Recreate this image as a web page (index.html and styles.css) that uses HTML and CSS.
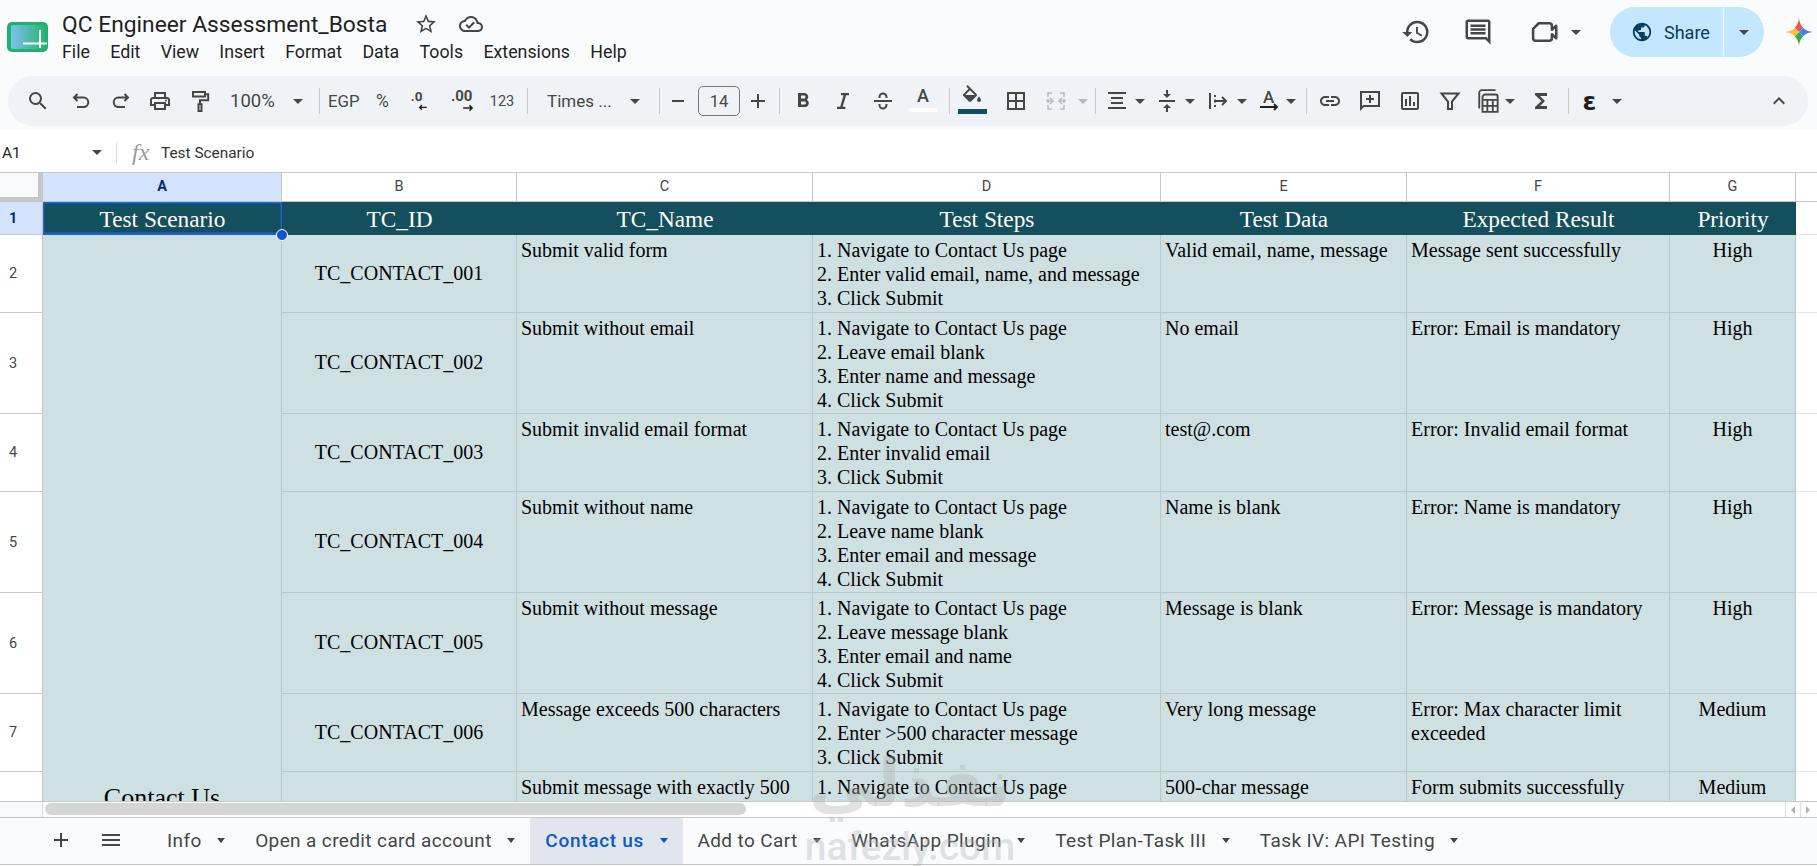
FILE: index.html
```html
<!DOCTYPE html>
<html lang="en">
<head>
<meta charset="utf-8">
<title>QC Engineer Assessment_Bosta</title>
<link rel="stylesheet" href="styles.css">
</head>
<body>
<div class="app">
  <header class="top">
    <div class="logo"><svg width="41" height="30" viewBox="0 0 41 30"><defs><linearGradient id="lg" x1="0" x2="1" y1="0" y2="0"><stop offset="0" stop-color="#7cc0f0"/><stop offset="1" stop-color="#28b56f"/></linearGradient></defs><rect width="41" height="30" rx="5" fill="#23b06c"/><rect x="4" y="3" width="34" height="24" rx="2" fill="url(#lg)"/><path d="M16 21.5h24M33 8v18" stroke="#fff" stroke-width="2" fill="none"/></svg></div>
    <div class="titlecol">
      <div class="titlerow">
        <span class="doc">QC Engineer Assessment_Bosta</span>
        <svg class="star" width="24" height="24" viewBox="0 0 24 24"><path d="M22 9.24l-7.19-.62L12 2 9.19 8.63 2 9.24l5.46 4.73L5.82 21 12 17.27 18.18 21l-1.63-7.03L22 9.24zM12 15.4l-3.76 2.27 1-4.28-3.32-2.88 4.38-.38L12 6.1l1.71 4.04 4.38.38-3.32 2.88 1 4.28L12 15.4z"/></svg>
        <svg class="cloud" width="24" height="24" viewBox="0 0 24 24"><path d="M19.35 10.04C18.67 6.59 15.64 4 12 4 9.11 4 6.6 5.64 5.35 8.04 2.34 8.36 0 10.91 0 14c0 3.31 2.69 6 6 6h13c2.76 0 5-2.24 5-5 0-2.64-2.05-4.78-4.65-4.96zM19 18H6c-2.21 0-4-1.79-4-4 0-2.05 1.53-3.76 3.56-3.97l1.07-.11.5-.95C8.08 7.14 9.94 6 12 6c2.62 0 4.88 1.86 5.39 4.43l.3 1.5 1.53.11c1.56.1 2.78 1.41 2.78 2.96 0 1.65-1.35 3-3 3zm-9-3.82l-2.09-2.09L6.5 13.5 10 17l6.01-6.01-1.41-1.41z"/></svg>
      </div>
      <nav class="menu"><span>File</span><span>Edit</span><span>View</span><span>Insert</span><span>Format</span><span>Data</span><span>Tools</span><span>Extensions</span><span>Help</span></nav>
    </div>
    <div class="actions">
      <svg class="ic-top" width="30" height="30" viewBox="0 0 24 24"><path d="M13 3a9 9 0 0 0-9 9H1l3.89 3.89.07.14L9 12H6c0-3.87 3.13-7 7-7s7 3.13 7 7-3.13 7-7 7c-1.93 0-3.68-.79-4.94-2.06l-1.42 1.42A8.954 8.954 0 0 0 13 21a9 9 0 0 0 0-18zm-1 5v5l4.28 2.54.72-1.21-3.5-2.08V8H12z"/></svg>
      <svg class="ic-top m32" width="30" height="30" viewBox="0 0 24 24"><path d="M21.99 4c0-1.1-.89-2-1.99-2H4c-1.1 0-2 .9-2 2v12c0 1.1.9 2 2 2h14l4 4-.01-18zM20 4v13.17L18.83 16H4V4h16zM6 12h12v2H6zm0-3h12v2H6zm0-3h12v2H6z"/></svg>
      <svg class="ic-top m37" width="30" height="30" viewBox="0 0 24 24"><path d="M7 5h8.5a2 2 0 0 1 2 2v3.2L21 7v10l-3.5-3.2V17a2 2 0 0 1-2 2H4.500a2 2 0 0 1-2-2V9.500z" fill="none" stroke="#444746" stroke-width="2" stroke-linejoin="round"/></svg>
      <i class="caret m11"></i>
      <div class="share">
        <div class="share-main"><svg width="22" height="22" viewBox="0 0 24 24"><path d="M12 2C6.48 2 2 6.48 2 12s4.48 10 10 10 10-4.48 10-10S17.52 2 12 2zm-1 17.93c-3.95-.49-7-3.85-7-7.93 0-.62.08-1.21.21-1.79L9 15v1c0 1.1.9 2 2 2v1.93zm6.9-2.54c-.26-.81-1-1.39-1.9-1.39h-1v-3c0-.55-.45-1-1-1H8v-2h2c.55 0 1-.45 1-1V7h2c1.1 0 2-.9 2-2v-.41c2.93 1.19 5 4.06 5 7.41 0 2.08-.8 3.97-2.1 5.39z"/></svg><span>Share</span></div>
        <div class="share-drop"><i class="caret caret-share"></i></div>
      </div>
      <svg class="gem" width="28" height="28" viewBox="0 0 24 24"><defs><clipPath id="gc"><path d="M12 0C12.6 7 17 11.4 24 12 17 12.6 12.6 17 12 24 11.4 17 7 12.6 0 12 7 11.4 11.4 7 12 0Z"/></clipPath></defs><g clip-path="url(#gc)"><path d="M0 0h24L12 12z" fill="#e8574e"/><path d="M24 0v24L12 12z" fill="#4a7fe8"/><path d="M0 24h24L12 12z" fill="#34a853"/><path d="M0 0v24l12-12z" fill="#f7c23c"/></g></svg>
    </div>
  </header>

  <div class="toolbar">
    <span class="b w39"><svg width="24" height="24" viewBox="0 0 24 24"><path d="M15.5 14h-.79l-.28-.27A6.47 6.47 0 0 0 16 9.5 6.5 6.5 0 1 0 9.5 16c1.61 0 3.09-.59 4.23-1.57l.27.28v.79l5 4.99L20.49 19l-4.99-5zm-6 0C7.01 14 5 11.99 5 9.5S7.01 5 9.5 5 14 7.01 14 9.5 11.99 14 9.5 14z"/></svg></span>
    <span class="b w39 m4"><svg class="st" width="24" height="24" viewBox="0 0 24 24"><path d="M8.5 5 5 8.5 8.5 12M5 8.5h9.5a4.8 4.8 0 0 1 0 9.6H8"/></svg></span>
    <span class="b w39"><svg class="st" width="24" height="24" viewBox="0 0 24 24"><path d="M15.5 5 19 8.5 15.5 12M19 8.5H9.5a4.8 4.8 0 0 0 0 9.6H16"/></svg></span>
    <span class="b w39"><svg width="24" height="24" viewBox="0 0 24 24"><path d="M19 8h-1V3H6v5H5c-1.66 0-3 1.34-3 3v6h4v4h12v-4h4v-6c0-1.66-1.34-3-3-3zM8 5h8v3H8V5zm8 14H8v-4h8v4zm2-4v-2H6v2H4v-4c0-.55.45-1 1-1h14c.55 0 1 .45 1 1v4h-2z"/><circle cx="18" cy="11.5" r="1"/></svg></span>
    <span class="b w39"><svg class="st" width="24" height="24" viewBox="0 0 24 24"><path d="M5 3h12v4.5H5zM17 5.2h3.2v6H12v4M10.5 15.3h3V22h-3z"/></svg></span>
    <span class="t zoomt">100%</span>
    <span class="cw w22 m11"><i class="caret"></i></span>
    <i class="sep m10"></i>
    <span class="t egp m8">EGP</span>
    <span class="t pct">%</span>
    <span class="dec w24"><svg width="30" height="30" viewBox="0 0 30 30"><text x="6" y="15" class="dect">.0</text><path d="M26 23h-9m3-3-3 3 3 3" class="dar"/></svg></span>
    <span class="dec w30 m20"><svg width="34" height="30" viewBox="0 0 34 30"><text x="1" y="15" class="dect">.00</text><path d="M15 23h10m-3-3 3 3-3 3" class="dar"/></svg></span>
    <span class="t num m7">123</span>
    <i class="sep m10"></i>
    <span class="t font m19">Times ...</span>
    <span class="cw w22 m11"><i class="caret"></i></span>
    <i class="sep m13"></i>
    <span class="b w24 m6"><svg width="24" height="24" viewBox="0 0 24 24"><path d="M6 11h12v2H6z"/></svg></span>
    <span class="size m8">14</span>
    <span class="b w24 m6"><svg width="24" height="24" viewBox="0 0 24 24"><path d="M19 13h-6v6h-2v-6H5v-2h6V5h2v6h6z"/></svg></span>
    <i class="sep m9"></i>
    <span class="b w40 m3"><svg width="24" height="24" viewBox="0 0 24 24"><path d="M15.6 10.79c.97-.67 1.65-1.77 1.65-2.79 0-2.26-1.75-4-4-4H7v14h7.04c2.09 0 3.71-1.7 3.71-3.79 0-1.52-.86-2.82-2.15-3.42zM10 6.5h3c.83 0 1.5.67 1.5 1.5s-.67 1.5-1.5 1.5h-3v-3zm3.5 9H10v-3h3.5c.83 0 1.5.67 1.5 1.5s-.67 1.5-1.5 1.5z"/></svg></span>
    <span class="b w40"><svg width="24" height="24" viewBox="0 0 24 24"><path d="M10 4v2.2h2.6L9.2 17.8H6V20h8.4v-2.2h-2.7l3.4-11.6H18V4z"/></svg></span>
    <span class="b w40"><svg class="st" width="24" height="24" viewBox="0 0 24 24"><path d="M3 12h18M8.5 9V8a3.5 3.5 0 0 1 7 0v1M8.5 15v1a3.5 3.5 0 0 0 7 0v-1"/></svg></span>
    <span class="b w40 colA"><span class="ltr">A</span><i class="wbar"></i></span>
    <i class="sep m6"></i>
    <span class="b w40 m2 fill"><svg width="28" height="24" viewBox="0 0 24 24"><path d="M16.56 8.94L7.62 0 6.21 1.41l2.38 2.38-5.15 5.15c-.59.59-.59 1.54 0 2.12l5.5 5.5c.29.29.68.44 1.06.44s.77-.15 1.06-.44l5.5-5.5c.59-.58.59-1.53 0-2.12zM5.21 10L10 5.21 14.79 10H5.21zM19 11.5s-2 2.17-2 3.5c0 1.1.9 2 2 2s2-.9 2-2c0-1.33-2-3.5-2-3.5z"/></svg><i class="fbar"></i></span>
    <span class="b w40 m4"><svg width="24" height="24" viewBox="0 0 24 24"><path d="M3 3v18h18V3H3zm8 16H5v-6h6v6zm0-8H5V5h6v6zm8 8h-6v-6h6v6zm0-8h-6V5h6v6z"/></svg></span>
    <span class="b w40"><svg class="st gr" width="24" height="24" viewBox="0 0 24 24"><path d="M8 4H4v4M4 10v4M4 16v4h4M16 4h4v4M20 10v4M20 16v4h-4M2 12h7m-3-3 3 3-3 3M22 12h-7m3-3-3 3 3 3"/></svg></span>
    <span class="cw w14"><i class="caret caret-gr"></i></span>
    <i class="sep m5"></i>
    <span class="b w24 m9"><svg class="st" width="24" height="24" viewBox="0 0 24 24"><path d="M3 4h18M6 9h12M6 14h12M3 19h18"/></svg></span>
    <span class="cw w22"><i class="caret"></i></span>
    <span class="b w24 m4"><svg width="24" height="24" viewBox="0 0 24 24"><path d="M8 19h3v4h2v-4h3l-4-4-4 4zm8-14h-3V1h-2v4H8l4 4 4-4zM4 11v2h16v-2H4z"/></svg></span>
    <span class="cw w22"><i class="caret"></i></span>
    <span class="b w24 m5"><svg class="st" width="24" height="24" viewBox="0 0 24 24"><path d="M4 4v16M9 6v2M9 10.5v3M9 16v2M9 12h11m-4-4 4 4-4 4"/></svg></span>
    <span class="cw w24"><i class="caret"></i></span>
    <span class="b w24 m3 rot"><svg width="24" height="26" viewBox="0 0 24 26"><text x="6" y="15" class="rota">A</text><path d="M3 19h17m-3-3 3 3-3 3" class="dar"/></svg></span>
    <span class="cw w20"><i class="caret"></i></span>
    <i class="sep m5"></i>
    <span class="b w40 m3"><svg width="24" height="24" viewBox="0 0 24 24"><path d="M3.9 12c0-1.71 1.39-3.1 3.1-3.1h4V7H7c-2.76 0-5 2.24-5 5s2.24 5 5 5h4v-1.9H7c-1.71 0-3.1-1.39-3.1-3.1zM8 13h8v-2H8v2zm9-6h-4v1.9h4c1.71 0 3.1 1.39 3.1 3.1s-1.39 3.1-3.1 3.1h-4V17h4c2.76 0 5-2.24 5-5s-2.24-5-5-5z"/></svg></span>
    <span class="b w40"><svg width="24" height="24" viewBox="0 0 24 24"><path d="M2 2h20v16H6l-4 4zm2 2v13.2L5.2 16H20V4z"/><path d="M11 6h2v3h3v2h-3v3h-2v-3H8V9h3z"/></svg></span>
    <span class="b w39"><svg width="24" height="24" viewBox="0 0 24 24"><path d="M19 3H5c-1.1 0-2 .9-2 2v14c0 1.1.9 2 2 2h14c1.1 0 2-.9 2-2V5c0-1.1-.9-2-2-2zm0 16H5V5h14v14zM7 10h2v7H7zm4-3h2v10h-2zm4 6h2v4h-2z"/></svg></span>
    <span class="b w40"><svg class="st" width="24" height="24" viewBox="0 0 24 24"><path d="M3.5 4.5h17L14 12.5V20h-4v-7.5z"/></svg></span>
    <span class="b w30 m4"><svg class="st thin" width="26" height="26" viewBox="0 0 24 24"><path d="M3 19V4.5A2.500 2.500 0 0 1 5.500 2H18M6 22V8.500A2.500 2.500 0 0 1 8.500 6H18a2 2 0 0 1 2 2v14zM6 11h14M10.500 11v11M15.500 11v11M6 16.500h14"/></svg></span>
    <span class="cw w12"><i class="caret"></i></span>
    <span class="b w40 m5"><svg width="24" height="24" viewBox="0 0 24 24"><path d="M18 4H6v2l6.500 6L6 18v2h12v-3h-7l5-5-5-5h7z"/></svg></span>
    <i class="sep m7"></i>
    <span class="b w30 m6 eps">ɛ</span>
    <span class="cw w22 m1"><i class="caret"></i></span>
    <span class="b w40 collapse"><svg width="24" height="24" viewBox="0 0 24 24"><path d="M7.410 15.410L12 10.830l4.590 4.580L18 14l-6-6-6 6z"/></svg></span>
  </div>

  <div class="formula">
    <span class="ref">A1</span>
    <span class="cw ref-c"><i class="caret"></i></span>
    <i class="fsep"></i>
    <span class="fx">fx</span>
    <span class="ftext">Test Scenario</span>
  </div>

  <div class="grid">
    <div class="corner"></div>
    <div class="ch ch-on">A</div><div class="ch">B</div><div class="ch">C</div><div class="ch">D</div><div class="ch">E</div><div class="ch">F</div><div class="ch">G</div><div class="ch ch-x"></div>

    <div class="rh rh-on">1</div>
    <div class="hc hc-sel">Test Scenario<i class="handle"></i></div><div class="hc">TC_ID</div><div class="hc">TC_Name</div><div class="hc">Test Steps</div><div class="hc">Test Data</div><div class="hc">Expected Result</div><div class="hc">Priority</div><div class="blank"></div>

    <div class="rh">2</div>
    <div class="c merged">Contact Us</div>
    <div class="c mid">TC_CONTACT_001</div><div class="c">Submit valid form</div><div class="c">1. Navigate to Contact Us page<br>2. Enter valid email, name, and message<br>3. Click Submit</div><div class="c">Valid email, name, message</div><div class="c">Message sent successfully</div><div class="c ctr">High</div><div class="blank"></div>

    <div class="rh">3</div>
    <div class="c mid">TC_CONTACT_002</div><div class="c">Submit without email</div><div class="c">1. Navigate to Contact Us page<br>2. Leave email blank<br>3. Enter name and message<br>4. Click Submit</div><div class="c">No email</div><div class="c">Error: Email is mandatory</div><div class="c ctr">High</div><div class="blank"></div>

    <div class="rh">4</div>
    <div class="c mid">TC_CONTACT_003</div><div class="c">Submit invalid email format</div><div class="c">1. Navigate to Contact Us page<br>2. Enter invalid email<br>3. Click Submit</div><div class="c">test@.com</div><div class="c">Error: Invalid email format</div><div class="c ctr">High</div><div class="blank"></div>

    <div class="rh">5</div>
    <div class="c mid">TC_CONTACT_004</div><div class="c">Submit without name</div><div class="c">1. Navigate to Contact Us page<br>2. Leave name blank<br>3. Enter email and message<br>4. Click Submit</div><div class="c">Name is blank</div><div class="c">Error: Name is mandatory</div><div class="c ctr">High</div><div class="blank"></div>

    <div class="rh">6</div>
    <div class="c mid">TC_CONTACT_005</div><div class="c">Submit without message</div><div class="c">1. Navigate to Contact Us page<br>2. Leave message blank<br>3. Enter email and name<br>4. Click Submit</div><div class="c">Message is blank</div><div class="c">Error: Message is mandatory</div><div class="c ctr">High</div><div class="blank"></div>

    <div class="rh">7</div>
    <div class="c mid">TC_CONTACT_006</div><div class="c">Message exceeds 500 characters</div><div class="c">1. Navigate to Contact Us page<br>2. Enter &gt;500 character message<br>3. Click Submit</div><div class="c">Very long message</div><div class="c">Error: Max character limit exceeded</div><div class="c ctr">Medium</div><div class="blank"></div>

    <div class="rh">8</div>
    <div class="c mid"></div><div class="c">Submit message with exactly 500</div><div class="c">1. Navigate to Contact Us page</div><div class="c">500-char message</div><div class="c">Form submits successfully</div><div class="c ctr">Medium</div><div class="blank"></div>
  </div>

  <div class="hbar">
    <div class="hbar-l"></div>
    <div class="hbar-track"><div class="thumb"></div></div>
    <div class="arrows"><span class="arr"><i class="tri-l"></i></span><span class="arr"><i class="tri-r"></i></span></div>
  </div>

  <div class="tabs">
    <span class="tabicon add"><svg width="24" height="24" viewBox="0 0 24 24"><path d="M19 13h-6v6h-2v-6H5v-2h6V5h2v6h6z"/></svg></span>
    <span class="tabicon list"><svg width="24" height="24" viewBox="0 0 24 24"><path d="M3 18h18v-2H3v2zm0-5h18v-2H3v2zm0-7v2h18V6H3z"/></svg></span>
    <div class="tab t-info"><span>Info</span><i class="caret"></i></div>
    <div class="tab"><span>Open a credit card account</span><i class="caret"></i></div>
    <div class="tab tab-on"><span>Contact us</span><i class="caret"></i></div>
    <div class="tab"><span>Add to Cart</span><i class="caret"></i></div>
    <div class="tab"><span>WhatsApp Plugin</span><i class="caret"></i></div>
    <div class="tab"><span>Test Plan-Task III</span><i class="caret"></i></div>
    <div class="tab"><span>Task IV: API Testing</span><i class="caret"></i></div>
  </div>

  <div class="mark" aria-hidden="true"><span class="mark-ar">نفذلي</span><span class="mark-en">nafezly.com</span></div>
</div>
</body>
</html>
```

FILE: styles.css
```css
* { box-sizing: border-box; }
html, body { margin: 0; padding: 0; }
body { background: #f9fbfd; font-family: Roboto, "Liberation Sans", sans-serif; color: #1f1f1f; overflow: hidden; }
i { display: block; font-style: normal; }
svg { display: block; fill: #444746; }
.app { position: relative; width: 1817px; height: 866px; overflow: hidden; display: flex; flex-direction: column; }

/* top bar */
.top { height: 76px; display: flex; flex: none; padding-left: 7px; }
.logo { margin-top: 22px; width: 41px; height: 30px; }
.titlecol { margin-left: 14px; padding-top: 8px; }
.titlerow { display: flex; align-items: center; height: 32px; }
.doc { font-size: 22.800px; width: 324px; white-space: nowrap; }
.star { margin-left: 28px; }
.cloud { margin-left: 21px; }
.menu { display: flex; gap: 20.300px; font-size: 17.800px; margin-top: -1px; height: 24px; align-items: center; }
.actions { margin-left: auto; display: flex; align-items: center; height: 64px; padding-right: 4px; }
.m32 { margin-left: 32px; } .m37 { margin-left: 37px; }
.share { margin-left: 29px; margin-right: 21px; width: 154px; height: 50px; display: flex; color: #0b3b60; }
.share-main { width: 113px; background: #c2e7ff; border-radius: 25px 0 0 25px; display: flex; align-items: center; padding-left: 21px; gap: 11px; font-size: 18px; }
.share-main svg { fill: #0b3b60; }
.share-drop { margin-left: 1px; flex: 1; background: #c2e7ff; border-radius: 0 25px 25px 0; display: flex; align-items: center; justify-content: center; }
.caret-share { border-top-color: #0b3b60; }

/* toolbar */
.toolbar { height: 50px; flex: none; margin: 0 9px 0 8px; padding: 0 9px 0 10px; border-radius: 25px; background: #eff3f8; display: flex; align-items: center; color: #444746; }
.b { display: flex; align-items: center; justify-content: center; flex: none; height: 40px; }
.cw { display: flex; align-items: center; justify-content: center; flex: none; }
.caret { width: 0; height: 0; border-left: 5.500px solid transparent; border-right: 5.500px solid transparent; border-top: 5.500px solid #444746; flex: none; }
.caret-gr { border-top-color: #b4b8bc; }
.w12 { width: 12px; } .w14 { width: 14px; } .w20 { width: 20px; } .w22 { width: 22px; } .w24 { width: 24px; } .w30 { width: 30px; } .w39 { width: 39.500px; } .w40 { width: 40px; }
.m1 { margin-left: 1px; } .m2 { margin-left: 2px; } .m3 { margin-left: 3px; } .m4 { margin-left: 4px; } .m5 { margin-left: 5px; } .m6 { margin-left: 6px; } .m7 { margin-left: 7px; } .m8 { margin-left: 8px; } .m9 { margin-left: 9px; } .m10 { margin-left: 10px; } .m11 { margin-left: 11px; } .m13 { margin-left: 13px; } .m19 { margin-left: 19px; } .m20 { margin-left: 20px; }
.sep { width: 1px; height: 26px; background: #c7c7c7; flex: none; }
.st { fill: none; stroke: #444746; stroke-width: 2; stroke-linejoin: miter; }
.st.thin { stroke-width: 1.700; }
.st.gr { stroke: #b9bdc1; stroke-width: 1.600; }
.t { flex: none; white-space: nowrap; }
.zoomt { margin-left: 10.500px; width: 46px; font-size: 18.500px; }
.egp { width: 28px; font-size: 16.800px; }
.pct { width: 50px; padding-left: 3px; text-align: center; font-size: 17.500px; }
.num { width: 30px; text-align: center; font-size: 14.500px; }
.font { width: 66px; font-size: 17px; }
.dec { flex: none; display: flex; justify-content: center; }
.dect { font: 700 17px Roboto, sans-serif; fill: #444746; }
.dar { fill: none; stroke: #1f1f1f; stroke-width: 1.800; }
.size { width: 42px; height: 30px; flex: none; border: 1px solid #747775; border-radius: 5px; display: flex; align-items: center; justify-content: center; font-size: 16.500px; }
.colA { flex-direction: column; position: relative; }
.ltr { font-size: 18px; font-weight: 500; line-height: 20px; margin-top: -5px; }
.wbar { width: 28px; height: 4px; background: #fff; margin-top: 2px; border-radius: 1px; }
.fill { flex-direction: column; }
.fill svg { margin-top: -4px; }
.fbar { width: 29px; height: 5px; background: #134f5c; margin-top: 0; }
.rot svg { overflow: visible; }
.rota { font: 500 17px Roboto, sans-serif; fill: #444746; }
.eps { font: 700 25px "DejaVu Sans", sans-serif; color: #1f1f1f; }
.collapse { margin-left: auto; }

/* formula bar */
.formula { margin-top: 10px; height: 36px; flex: none; background: #fff; display: flex; align-items: center; position: relative; padding-bottom: 3px; }
.formula::before { content: ""; position: absolute; left: 0; right: 0; top: -6px; height: 6px; background: #fff; }
.ref { margin-left: 2px; width: 87px; font-size: 15.500px; }
.ref-c { width: 16px; }
.fsep { margin-left: 11px; width: 1px; height: 22px; background: #e0e0e0; }
.fx { margin-left: 15px; width: 29px; font: italic 24px "Liberation Serif", serif; color: #9a9a9a; }
.ftext { font-size: 15.400px; color: #333; }

/* sheet */
.grid { height: 629px; flex: none; overflow: hidden; background: #fff; display: grid; grid-template-columns: 43px 239px 235px 296px 348px 246px 263px 126px 22px; grid-template-rows: 29px 33px 78px 101px 78px 101px 101px 78px 78px; border-top: 1px solid #c7c7c7; font-family: "Liberation Serif", "Times New Roman", serif; }
.corner { background: #f8f9fa; border-right: 5px solid #c4c7c5; border-bottom: 5px solid #c4c7c5; }
.ch, .rh { font-family: Roboto, sans-serif; color: #444746; display: flex; align-items: center; justify-content: center; background: #fff; border-right: 1px solid #c7c7c7; border-bottom: 1px solid #c7c7c7; font-size: 14.500px; }
.ch { padding-bottom: 1px; }
.rh { grid-column: 1; justify-content: flex-start; padding-left: 9px; }
.ch-on { background: #d3e3fd; color: #0b2a6b; font-weight: 700; }
.ch-x { border-right: 0; }
.rh-on { background: #d3e3fd; color: #0b2a6b; font-weight: 700; }
.hc { background: #134f5c; color: #fff; font-size: 23.300px; display: flex; align-items: center; justify-content: center; padding-top: 1px; position: relative; }
.hc-sel { box-shadow: inset 0 0 0 1.500px #1a62d6, inset 0 -2.500px 0 #1a62d6; z-index: 2; }
.handle { position: absolute; right: -6px; bottom: -6px; width: 12px; height: 12px; border-radius: 50%; background: #1155cc; border: 1px solid #fff; z-index: 3; }
.c { background: #cfe0e3; color: #000; font-size: 20px; line-height: 24px; padding: 3px 4px 0; border-right: 1px solid #b7c9cd; border-bottom: 1px solid #b7c9cd; overflow: hidden; }
.mid { display: flex; align-items: center; justify-content: center; padding: 0 4px 2px; }
.ctr { text-align: center; }
.merged { grid-column: 2; grid-row: 3 / span 7; display: flex; align-items: center; justify-content: center; font-size: 26px; height: 1126px; padding: 0; }
.blank { background: #fff; border-bottom: 1px solid #e6e6e6; }

/* horizontal scroll bar */
.hbar { height: 16px; flex: none; background: #fff; display: flex; border-top: 1px solid #c7c7c7; }
.hbar-l { width: 43px; background: #f8f9fa; border-right: 1px solid #e0e0e0; }
.hbar-track { flex: 1; padding: 1px 0 0 2px; }
.thumb { width: 701px; height: 12px; border-radius: 6px; background: #d5d5d5; }
.arrows { display: flex; margin-right: 2px; }
.arr { width: 15px; border-left: 1px solid #e0e0e0; display: flex; align-items: center; justify-content: center; }
.tri-l { border-top: 4px solid transparent; border-bottom: 4px solid transparent; border-right: 4px solid #b0b0b0; }
.tri-r { border-top: 4px solid transparent; border-bottom: 4px solid transparent; border-left: 4px solid #b0b0b0; }

/* sheet tabs */
.tabs { height: 48px; flex: none; display: flex; align-items: stretch; border-top: 1px solid #c7c7c7; border-bottom: 1px solid #c4c4c4; padding-left: 49px; color: #444746; font-size: 19px; }
.tabicon { display: flex; align-items: center; justify-content: center; width: 24px; padding-bottom: 2px; }
.list { margin-left: 26px; }
.tab { display: flex; align-items: center; padding: 0 15px 2px; gap: 15.500px; white-space: nowrap; letter-spacing: .38px; }
.t-info { margin-left: 29px; }
.tab .caret { border-left-width: 4.500px; border-right-width: 4.500px; border-top-width: 5px; }
.tab-on { background: #e1e6ee; color: #0b57d0; font-weight: 500; letter-spacing: .7px; }
.tab-on .caret { border-top-color: #0b57d0; }

/* watermark over the page */
.mark { position: absolute; left: 812px; top: 745px; width: 196px; display: flex; flex-direction: column; align-items: center; pointer-events: none; color: rgba(175, 175, 175, .36); line-height: 1; }
.mark-ar { font: 700 66px/78px "DejaVu Sans", sans-serif; white-space: nowrap; }
.mark-en { font: 500 39px/40px Roboto, sans-serif; margin-top: 4px; }
```
